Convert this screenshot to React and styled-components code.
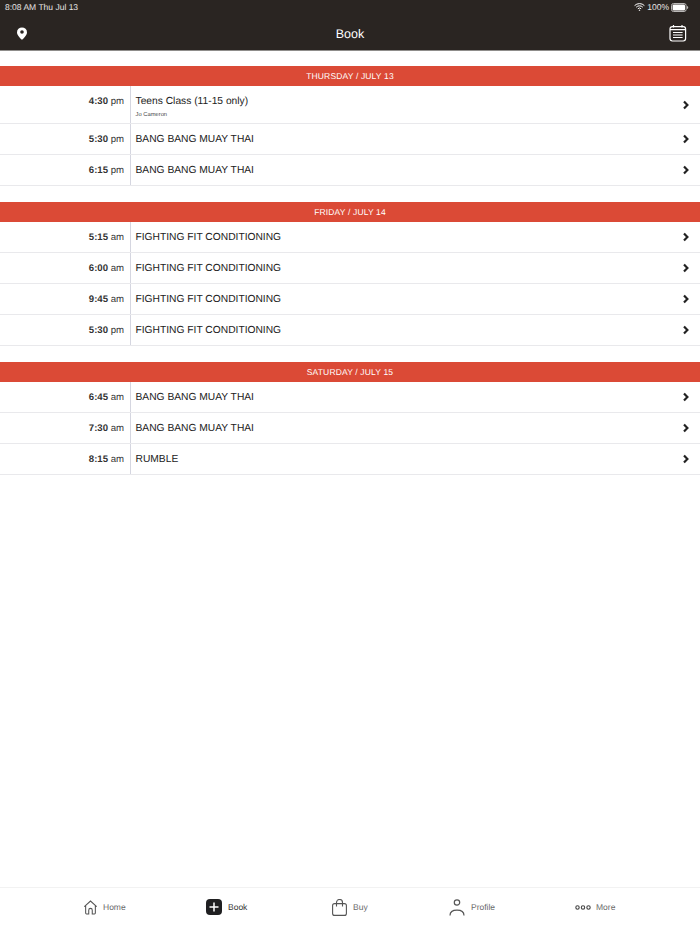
import React from 'react';
import styled, { createGlobalStyle } from 'styled-components';

const Global = createGlobalStyle`
  html, body { margin: 0; padding: 0; background: #fff; }
  body { font-family: "Liberation Sans", Arial, sans-serif; text-rendering: geometricPrecision; }
`;
const Page = styled.div`
  width: 700px; height: 934px; display: flex; flex-direction: column; overflow: hidden; background: #fff;
`;
const TopBar = styled.header`
  height: 51px; box-sizing: border-box; background: #2a2522; border-bottom: 1px solid #8f8d8b;
  display: flex; flex-direction: column; flex: none; color: #fff;
`;
const StatusBar = styled.div`
  height: 14px; display: flex; align-items: center; justify-content: space-between;
  padding: 0 11px 0 5px; font-size: 8.500px; color: #e8e6e5;
`;
const StatusRight = styled.div`display: flex; align-items: center; gap: 2px;`;
const NavBar = styled.div`
  flex: 1; display: flex; align-items: center; justify-content: space-between; padding: 2px 13px 0 15px; position: relative;
`;
const NavTitle = styled.div`
  position: absolute; left: 0; right: 0; top: 2px; text-align: center; font-size: 12.500px; line-height: 36px;
`;
const Schedule = styled.main`flex: 1; padding-top: 15px;`;
const Section = styled.section`margin-bottom: 16px;`;
const DayHeader = styled.h2`
  margin: 0; height: 20px; background: #db4a36; color: #fff; font-size: 8.500px; font-weight: 400;
  line-height: 20px; text-align: center; letter-spacing: .15px;
`;
const Row = styled.div`
  display: flex; align-items: stretch; height: ${p => (p.$tall ? 37 : 30)}px;
  border-bottom: 1px solid #e9e9ec; color: #222;
`;
const Time = styled.div`
  box-sizing: border-box; width: 131px; flex: none; text-align: right; padding: 9.500px 6px 0 0;
  border-right: 1px solid #d5d6e0; font-size: 9.600px; color: #333; line-height: 12px;
  b { font-weight: 700; }
`;
const Info = styled.div`
  flex: 1; padding-left: 4.500px; display: flex; flex-direction: column; justify-content: ${p => (p.$tall ? 'flex-start' : 'center')};
  padding-top: ${p => (p.$tall ? 8.5 : 1)}px;
`;
const ClassName = styled.div`font-size: 10.250px; line-height: 14px; color: #222;`;
const Teacher = styled.div`font-size: 5.800px; line-height: 7px; color: #444; margin-top: 3px;`;
const Chevron = styled.div`
  width: 30px; display: flex; align-items: center; justify-content: flex-end; padding-right: 10px; box-sizing: border-box;
`;
const TabBar = styled.nav`
  height: 46px; flex: none; border-top: 1px solid #f2f2f2;
`;
const TabRow = styled.div`
  display: flex; height: 38px; align-items: center; padding-left: 83px;
`;
const Tab = styled.div`
  display: flex; align-items: center; gap: ${p => p.$gap}px; width: ${p => p.$w}px; flex: none;
  font-size: 8.500px; color: ${p => (p.$active ? '#333' : '#6a6a6a')};
`;

const Pin = () => (
  <svg width="14" height="16" viewBox="0 0 14 16"><path fillRule="evenodd" fill="#fff" d="M7 2.400a5 5 0 0 0-5 5c0 2.800 3.200 5.600 5 7.400 1.800-1.800 5-4.600 5-7.400a5 5 0 0 0-5-5zm0 2.800a1.800 1.800 0 1 1 0 3.600 1.800 1.800 0 0 1 0-3.600z" /></svg>
);
const Calendar = () => (
  <svg width="18" height="18" viewBox="0 0 18 18" fill="none" stroke="#fff" strokeWidth="1.200"><rect x="1" y="2.600" width="15.600" height="14.400" rx="2.400" /><path d="M4.500 1v2.400M13 1v2.400M1 5.600h15.600M4 8.500h9.600M4 11h9.600M4 13.500h9.600" /></svg>
);
const Wifi = () => (
  <svg width="11" height="8" viewBox="0 0 11 8" fill="none" stroke="#fff"><path d="M.6 2.600a7 7 0 0 1 9.800 0M2.200 4.200a4.700 4.700 0 0 1 6.600 0M3.800 5.800a2.400 2.400 0 0 1 3.400 0" strokeWidth="1" /><path d="M5.500 6.400 6.400 7.200 5.500 8 4.600 7.200z" fill="#fff" stroke="none" /></svg>
);
const Battery = () => (
  <svg width="18" height="9" viewBox="0 0 18 9"><rect x=".5" y=".5" width="14.600" height="8" rx="2" fill="none" stroke="#b9b7b6" /><rect x="1.600" y="1.600" width="12.400" height="5.800" rx="1" fill="#fff" /><path d="M16 3v3c.8-.2 1.200-.8 1.200-1.500S16.800 3.200 16 3z" fill="#b9b7b6" /></svg>
);
const Arrow = () => (
  <svg width="8" height="10" viewBox="0 1 8 10" fill="none" stroke="#222" strokeWidth="2.200"><path d="M2 2.500 5.400 6 2 9.500" /></svg>
);
const HomeIcon = () => (
  <svg width="15" height="15" viewBox="0 0 17 17" fill="none" stroke="#555" strokeWidth="1.200"><path d="M1.500 7.500 8.500 1.200l7 6.300M3 6.500v8.300a1 1 0 0 0 1 1h2.500v-4.300a2 2 0 0 1 4 0v4.300H13a1 1 0 0 0 1-1V6.500" /></svg>
);
const BookIcon = () => (
  <svg width="16" height="16" viewBox="0 0 16 16"><rect width="16" height="16" rx="4" fill="#1f1f21" /><path d="M8 3.500v9M3.500 8h9" stroke="#fff" strokeWidth="1.500" /></svg>
);
const BagIcon = () => (
  <svg width="15" height="17" viewBox="0 0 15 17" fill="none" stroke="#555" strokeWidth="1.100"><rect x=".6" y="4.600" width="13.800" height="11.800" rx="2" /><path d="M4.500 7.500V3.500a3 3 0 0 1 6 0v4" /></svg>
);
const PersonIcon = () => (
  <svg width="16" height="17" viewBox="0 0 16 17" fill="none" stroke="#555" strokeWidth="1.200"><circle cx="8" cy="3.500" r="2.700" /><path d="M1 16.500c0-3.500 3-5.300 7-5.300s7 1.800 7 5.300" /></svg>
);
const DotsIcon = () => (
  <svg width="16" height="5" viewBox="0 0 16 5" fill="none" stroke="#444" strokeWidth="1.100"><circle cx="2.500" cy="2.500" r="1.700" /><circle cx="8" cy="2.500" r="1.700" /><circle cx="13.500" cy="2.500" r="1.700" /></svg>
);

const days = [
  { title: 'THURSDAY / JULY 13', rows: [
    { h: '4:30', m: 'pm', name: 'Teens Class (11-15 only)', teacher: 'Jo Cameron' },
    { h: '5:30', m: 'pm', name: 'BANG BANG MUAY THAI' },
    { h: '6:15', m: 'pm', name: 'BANG BANG MUAY THAI' },
  ] },
  { title: 'FRIDAY / JULY 14', rows: [
    { h: '5:15', m: 'am', name: 'FIGHTING FIT CONDITIONING' },
    { h: '6:00', m: 'am', name: 'FIGHTING FIT CONDITIONING' },
    { h: '9:45', m: 'am', name: 'FIGHTING FIT CONDITIONING' },
    { h: '5:30', m: 'pm', name: 'FIGHTING FIT CONDITIONING' },
  ] },
  { title: 'SATURDAY / JULY 15', rows: [
    { h: '6:45', m: 'am', name: 'BANG BANG MUAY THAI' },
    { h: '7:30', m: 'am', name: 'BANG BANG MUAY THAI' },
    { h: '8:15', m: 'am', name: 'RUMBLE' },
  ] },
];

export default function App() {
  return (
    <Page>
      <Global />
      <TopBar>
        <StatusBar>
          <span>8:08 AM Thu Jul 13</span>
          <StatusRight><Wifi /><span>100%</span><Battery /></StatusRight>
        </StatusBar>
        <NavBar>
          <Pin />
          <NavTitle>Book</NavTitle>
          <Calendar />
        </NavBar>
      </TopBar>
      <Schedule>
        {days.map(d => (
          <Section key={d.title}>
            <DayHeader>{d.title}</DayHeader>
            {d.rows.map((r, i) => (
              <Row key={i} $tall={!!r.teacher}>
                <Time><b>{r.h}</b> {r.m}</Time>
                <Info $tall={!!r.teacher}>
                  <ClassName>{r.name}</ClassName>
                  {r.teacher && <Teacher>{r.teacher}</Teacher>}
                </Info>
                <Chevron><Arrow /></Chevron>
              </Row>
            ))}
          </Section>
        ))}
      </Schedule>
      <TabBar>
        <TabRow>
          <Tab $w={123} $gap={5}><HomeIcon />Home</Tab>
          <Tab $w={126} $gap={6} $active><BookIcon />Book</Tab>
          <Tab $w={117} $gap={6}><BagIcon />Buy</Tab>
          <Tab $w={126} $gap={6}><PersonIcon />Profile</Tab>
          <Tab $w={60} $gap={5}><DotsIcon />More</Tab>
        </TabRow>
      </TabBar>
    </Page>
  );
}
